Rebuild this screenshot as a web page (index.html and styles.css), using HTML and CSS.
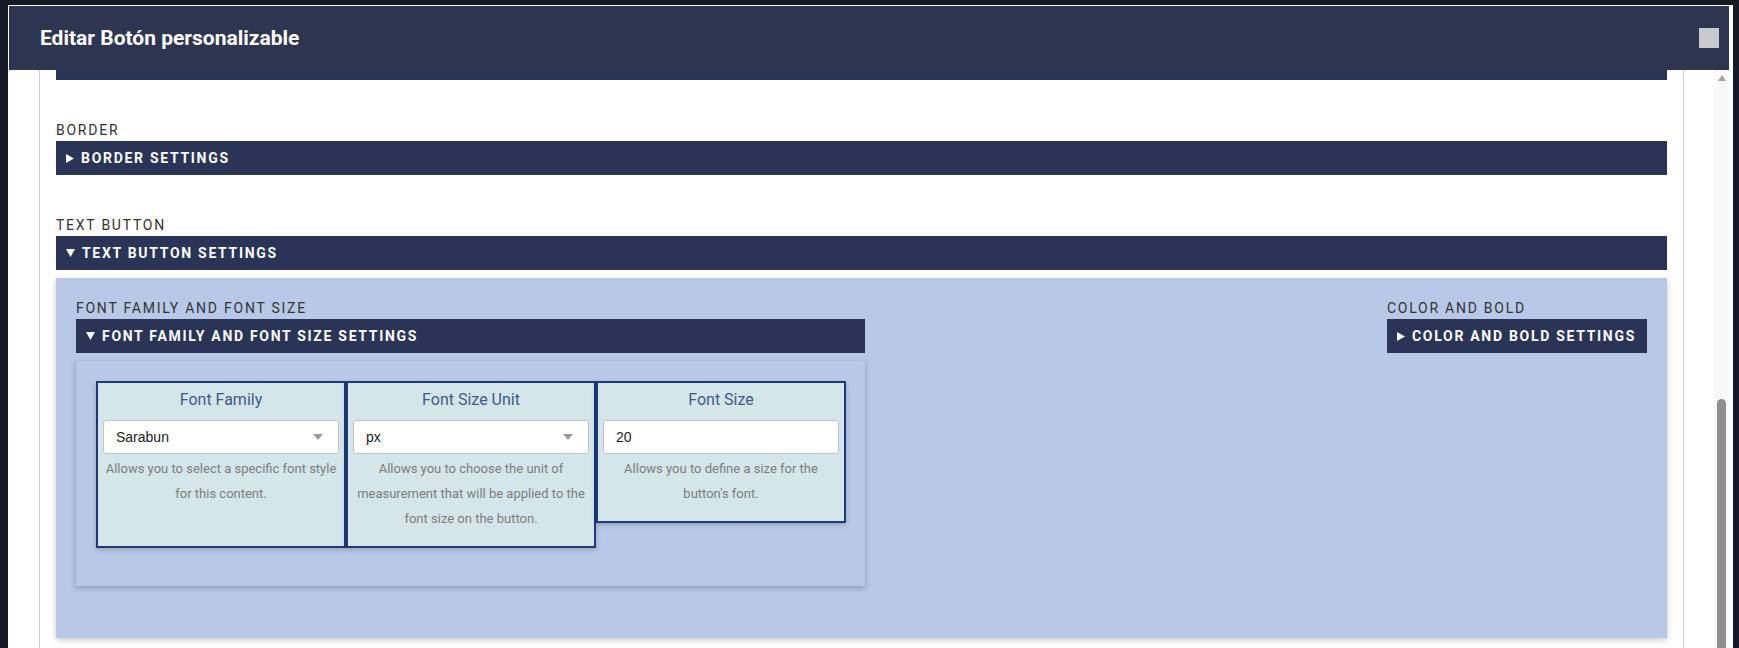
FILE: index.html
```html
<!DOCTYPE html>
<html lang="es">
<head>
<meta charset="utf-8">
<title>Editar Botón personalizable</title>
<link rel="stylesheet" href="styles.css">
</head>
<body>
<div class="modal">
  <header class="modal-header">
    <h1 class="modal-title">Editar Botón personalizable</h1>
    <span class="modal-close"></span>
  </header>
  <div class="modal-body">
    <div class="scroll-area">
      <div class="sheet">
        <div class="bar bar-tail"></div>

        <section class="group">
          <div class="group-label">BORDER</div>
          <div class="bar"><svg class="tri" width="8" height="9" viewBox="0 0 8 9"><path d="M0 0 L8 4.5 L0 9 Z"/></svg><span>BORDER SETTINGS</span></div>
        </section>

        <section class="group">
          <div class="group-label">TEXT BUTTON</div>
          <div class="bar"><svg class="tri" width="9" height="8" viewBox="0 0 9 8"><path d="M0 0 L9 0 L4.5 8 Z"/></svg><span>TEXT BUTTON SETTINGS</span></div>
          <div class="settings">
            <div class="sub sub-left">
              <div class="group-label">FONT FAMILY AND FONT SIZE</div>
              <div class="bar"><svg class="tri" width="9" height="8" viewBox="0 0 9 8"><path d="M0 0 L9 0 L4.5 8 Z"/></svg><span>FONT FAMILY AND FONT SIZE SETTINGS</span></div>
              <div class="sub-panel">
                <div class="cards">
                  <div class="card card-stretch">
                    <div class="card-title">Font Family</div>
                    <div class="select"><span>Sarabun</span><span class="caret"></span></div>
                    <p class="help">Allows you to select a specific font style for this content.</p>
                  </div>
                  <div class="card card-stretch">
                    <div class="card-title">Font Size Unit</div>
                    <div class="select"><span>px</span><span class="caret"></span></div>
                    <p class="help">Allows you to choose the unit of measurement that will be applied to the font size on the button.</p>
                  </div>
                  <div class="card">
                    <div class="card-title">Font Size</div>
                    <input class="text-input" type="text" value="20">
                    <p class="help">Allows you to define a size for the button's font.</p>
                  </div>
                </div>
              </div>
            </div>
            <div class="sub sub-right">
              <div class="group-label">COLOR AND BOLD</div>
              <div class="bar bar-inline"><svg class="tri" width="8" height="9" viewBox="0 0 8 9"><path d="M0 0 L8 4.5 L0 9 Z"/></svg><span>COLOR AND BOLD SETTINGS</span></div>
            </div>
          </div>
        </section>
      </div>
    </div>
    <div class="scrollbar">
      <span class="scroll-up"></span>
      <span class="scroll-thumb"></span>
    </div>
  </div>
</div>
</body>
</html>
```

FILE: styles.css
```css
* { box-sizing: border-box; }

html, body {
  margin: 0;
  height: 648px;
  overflow: hidden;
}

body {
  background: #151925;
  font-family: Roboto, "Noto Sans", sans-serif;
}

.modal {
  margin: 5px 6px 0 8px;
  height: 643px;
  background: #ffffff;
  padding: 1px 4px 0 1px;
  display: flex;
  flex-direction: column;
}

.modal-header {
  height: 64px;
  flex: 0 0 64px;
  background: #2e3551;
  display: flex;
  align-items: center;
  justify-content: space-between;
  padding: 0 10px 0 31px;
}

.modal-title {
  margin: 0;
  color: #ffffff;
  font-size: 21px;
  font-weight: 700;
}

.modal-close {
  width: 20px;
  height: 20px;
  background: #c8c9cf;
}

.modal-body {
  flex: 1;
  display: flex;
  overflow: hidden;
}

.scroll-area {
  flex: 1;
  overflow: hidden;
  padding: 0 30px;
}

.sheet {
  height: 100%;
  border-left: 1px solid #cfcfcf;
  border-right: 1px solid #cfcfcf;
  padding: 0 16px;
}

.bar {
  height: 34px;
  background: #293457;
  color: #ffffff;
  display: flex;
  align-items: center;
  padding: 0 10px;
  font-size: 14px;
  font-weight: 700;
  letter-spacing: 1.7px;
}

.bar .tri {
  fill: #ffffff;
  margin-right: 7px;
  flex: 0 0 auto;
}

.bar-tail {
  height: 10px;
}

.group {
  margin-top: 39px;
}

.group-label {
  font-size: 14px;
  line-height: 22px;
  letter-spacing: 1.75px;
  color: #333333;
}

.settings {
  margin-top: 8px;
  background: #b8c8e6;
  box-shadow: 0 2px 6px rgba(0, 0, 0, 0.22);
  padding: 19px 20px 52px 20px;
  display: flex;
  justify-content: space-between;
  align-items: flex-start;
}

.sub-left {
  width: 789px;
}

.sub-right {
  width: 260px;
}

.sub-panel {
  margin-top: 8px;
  background: #b8c8e6;
  box-shadow: 0 2px 6px rgba(0, 0, 0, 0.25);
  padding: 20px 19px 38px 20px;
}

.cards {
  display: flex;
  align-items: flex-start;
}

.card {
  width: 250px;
  background: #d4e6ea;
  border: 2px solid #1c3a78;
  box-shadow: 0 2px 5px rgba(0, 0, 0, 0.2);
  padding: 5px 5px 15px;
  text-align: center;
}

.card-stretch {
  align-self: stretch;
}

.card-title {
  font-size: 16px;
  line-height: 24px;
  color: #3b5c8b;
  margin-bottom: 8px;
}

.select,
.text-input {
  width: 100%;
  height: 34px;
  background: #ffffff;
  border: 1px solid #c4c4c4;
  border-radius: 3px;
  font-family: "Liberation Sans", Arial, sans-serif;
  font-size: 14px;
  color: #222222;
  text-align: left;
}

.select {
  display: flex;
  align-items: center;
  justify-content: space-between;
  padding: 0 15px 0 12px;
}

.caret {
  width: 0;
  height: 0;
  border-left: 5.5px solid transparent;
  border-right: 5.5px solid transparent;
  border-top: 6px solid #9a9a9a;
}

.text-input {
  display: block;
  padding: 0 12px;
  outline: none;
}

.help {
  margin: 2px 0 0;
  font-size: 13px;
  line-height: 25px;
  color: #7d7d7d;
}

.scrollbar {
  width: 15px;
  flex: 0 0 15px;
  background: #f8f8f8;
  display: flex;
  flex-direction: column;
  align-items: center;
}

.scroll-up {
  margin-top: 5px;
  width: 0;
  height: 0;
  border-left: 4.5px solid transparent;
  border-right: 4.5px solid transparent;
  border-bottom: 6px solid #a3a3a3;
}

.scroll-thumb {
  margin-top: 318px;
  width: 9px;
  flex: 1;
  background: #8f8f8f;
  border-radius: 5px 5px 0 0;
}
```
